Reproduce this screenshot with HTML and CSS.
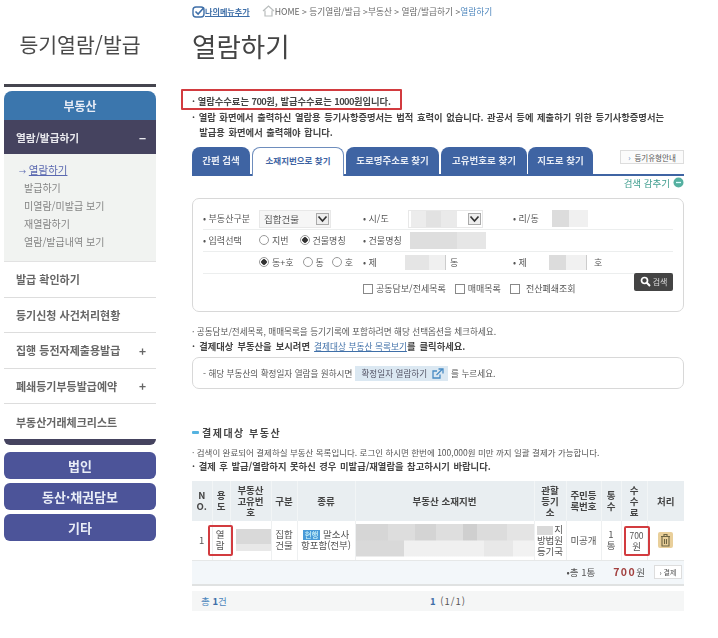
FILE: index.html
```html
<!DOCTYPE html>
<html lang="ko">
<head>
<meta charset="utf-8">
<title>열람하기</title>
<link rel="stylesheet" href="styles.css">
</head>
<body>
<div class="page">
  <aside class="side">
    <h2 class="side-title">등기열람/발급</h2>
    <div class="side-rule"></div>
    <div class="cat cat-top">부동산</div>
    <div class="cur">열람/발급하기<span class="sign">−</span></div>
    <ul class="sub">
      <li class="on"><span class="arr">→</span> <a>열람하기</a></li>
      <li>발급하기</li>
      <li>미열람/미발급 보기</li>
      <li>재열람하기</li>
      <li>열람/발급내역 보기</li>
    </ul>
    <div class="mi">발급 확인하기</div>
    <div class="mi">등기신청 사건처리현황</div>
    <div class="mi">집행 등전자제출용발급<span class="sign">+</span></div>
    <div class="mi">폐쇄등기부등발급예약<span class="sign">+</span></div>
    <div class="mi last">부동산거래체크리스트</div>
    <div class="side-end"></div>
    <div class="cat cat-b">법인</div>
    <div class="cat cat-b">동산·채권담보</div>
    <div class="cat cat-b">기타</div>
  </aside>

  <main class="main">
    <div class="crumb">
      <svg class="ic-check" width="13" height="13" viewBox="0 0 13 13"><rect x="1" y="2" width="11" height="10" rx="3" fill="none" stroke="#3f6fa8" stroke-width="1.4"/><path d="M3.500 6.500l2.600 2.600L12 2.500" fill="none" stroke="#3f6fa8" stroke-width="1.600"/></svg>
      <a class="mymenu">나의메뉴추가</a>
      <svg class="ic-home" width="13" height="12" viewBox="0 0 13 12"><path d="M1 6l5.500-5L12 6M3 5.500V11h7V5.500" fill="none" stroke="#b9bdbd" stroke-width="1.200"/></svg>
      <span>HOME &gt; 등기열람/발급 &gt;부동산 &gt; 열람/발급하기 &gt;<em>열람하기</em></span>
    </div>
    <h1 class="title">열람하기</h1>

    <p class="note redbox">· 열람수수료는 <span class="num">700</span>원, 발급수수료는 <span class="num">1000</span>원입니다.</p>
    <p class="note b2">· 열람 화면에서 출력하신 열람용 등기사항증명서는 법적 효력이 없습니다. 관공서 등에 제출하기 위한 등기사항증명서는<br>&nbsp;&nbsp;발급용 화면에서 출력해야 합니다.</p>

    <div class="tabs">
      <span class="tab t1">간편 검색</span>
      <span class="tab t2 sel">소재지번으로 찾기</span>
      <span class="tab t3">도로명주소로 찾기</span>
      <span class="tab t4">고유번호로 찾기</span>
      <span class="tab t5">지도로 찾기</span>
      <span class="guide"><i>›</i> 등기유형안내</span>
    </div>
    <div class="hide-row">검색 감추기 <svg width="11" height="11" viewBox="0 0 11 11"><circle cx="5.500" cy="5.500" r="5" fill="#55b0a0"/><path d="M3 5.500h5" stroke="#dff" stroke-width="1.300"/></svg></div>

    <section class="search">
      <div class="srow r1">
        <span class="lb">• 부동산구분</span>
        <span class="sel-box s1">집합건물<b class="drop"><svg width="11" height="8" viewBox="0 0 11 8"><path d="M1.500 1.500L5.500 6l4-4.500" fill="none" stroke="#333" stroke-width="1.700"/></svg></b></span>
        <span class="lb">• 시/도</span>
        <span class="sel-box s2"><span class="mosaic m-a"></span><b class="drop"><svg width="11" height="8" viewBox="0 0 11 8"><path d="M1.500 1.500L5.500 6l4-4.500" fill="none" stroke="#333" stroke-width="1.700"/></svg></b></span>
        <span class="lb">• 리/동</span>
        <span class="mosaic m-b"></span>
      </div>
      <div class="srow r2">
        <span class="lb">• 입력선택</span>
        <span class="radios"><i class="ra"></i>지번<i class="ra ck gap"></i>건물명칭</span>
        <span class="lb">• 건물명칭</span>
        <span class="mosaic m-c"></span>
      </div>
      <div class="srow r3">
        <span></span>
        <span class="radios"><i class="ra ck"></i>동+호<i class="ra gap2"></i>동<i class="ra gap3"></i>호</span>
        <span class="lb">• 제</span>
        <span class="unit"><span class="mosaic m-d"></span>동</span>
        <span class="lb">• 제</span>
        <span class="unit"><span class="mosaic m-e"></span>호</span>
      </div>
      <div class="srow r4">
        <span class="checks">
          <i class="cb"></i><span class="c1">공동담보/전세목록</span>
          <i class="cb"></i><span class="c2">매매목록</span>
          <i class="cb"></i><span class="c3">전산폐쇄조회</span>
        </span>
        <span class="go"><svg width="11" height="11" viewBox="0 0 11 11"><circle cx="4.500" cy="4.500" r="3" fill="none" stroke="#fff" stroke-width="1.700"/><path d="M6.800 6.800L10 10" stroke="#fff" stroke-width="2"/></svg> 검색</span>
      </div>
    </section>

    <p class="note n3">· 공동담보/전세목록, 매매목록을 등기기록에 포함하려면 해당 선택옵션을 체크하세요.</p>
    <p class="note b3">· 결제대상 부동산을 보시려면 <a>결제대상 부동산 목록보기</a>를 클릭하세요.</p>

    <div class="infobox">
      - 해당 부동산의 확정일자 열람을 원하시면
      <span class="chip">확정일자 열람하기 <svg width="12" height="11" viewBox="0 0 12 11"><path d="M8 6.500V10H1V3h4" fill="none" stroke="#4a8cc4" stroke-width="1.300"/><path d="M4.500 7L10 1.500M6.500 1H11v4.500" fill="none" stroke="#4a8cc4" stroke-width="1.300"/></svg></span>
      를 누르세요.
    </div>

    <h3 class="sec"><i></i>결제대상 부동산</h3>
    <p class="note n4">· 검색이 완료되어 결제하실 부동산 목록입니다. 로그인 하시면 한번에 100,000원 미만 까지 일괄 결제가 가능합니다.</p>
    <p class="note b4">· 결제 후 발급/열람하지 못하신 경우 미발급/재열람을 참고하시기 바랍니다.</p>

    <table class="tbl">
      <colgroup>
        <col class="w20"><col class="w18"><col class="w41"><col class="w26"><col class="w58"><col class="w179"><col class="w32"><col class="w35"><col class="w20"><col class="w26"><col>
      </colgroup>
      <thead>
        <tr><th>N<br>O.</th><th>용<br>도</th><th>부동산<br>고유번<br>호</th><th>구분</th><th>종류</th><th>부동산 소재지번</th><th>관할<br>등기<br>소</th><th>주민등<br>록번호</th><th>통<br>수</th><th>수<br>수<br>료</th><th>처리</th></tr>
      </thead>
      <tbody>
        <tr>
          <td>1</td>
          <td><span class="mark mk1">열<br>람</span></td>
          <td><span class="mosaic m-f"></span></td>
          <td>집합<br>건물</td>
          <td><span class="tag">현행</span> 말소사<br>항포함(전부)</td>
          <td><span class="mosaic m-g"></span></td>
          <td class="court"><span class="mosaic m-h"></span>지<br>방법원<br>등기국</td>
          <td>미공개</td>
          <td>1<br>통</td>
          <td><span class="mark mk2">700<br><span class="won">원</span></span></td>
          <td><span class="bin"><svg width="11" height="14" viewBox="0 0 11 14"><path d="M2 3.500h7V13H2zM1 3.500h9M4 3.500V1.500h3v2M4.500 6v5M6.500 6v5" fill="none" stroke="#6d6442" stroke-width="1.100"/></svg></span></td>
        </tr>
        <tr class="sum">
          <td colspan="11"><span class="sum-in"><span class="s-t">•총 1통</span><span class="s-m"><b>700</b>원</span><span class="pay">› 결제</span></span></td>
        </tr>
      </tbody>
    </table>
    <div class="pager"><span class="tot">총 <b>1</b>건</span><span class="pg"><b>1</b> (1/1)</span></div>
  </main>
</div>
</body>
</html>
```

FILE: styles.css
```css
* { box-sizing: border-box; }
html, body { margin: 0; padding: 0; background: #fff; }
body { font-family: "Noto Sans CJK KR", "Noto Sans", sans-serif; color: #555; overflow: hidden; }
.page { display: flex; width: 718px; height: 638px; padding-left: 4px; filter: blur(0.55px); }
p, h1, h2, h3, ul { margin: 0; padding: 0; }
i, em { font-style: normal; }

/* sidebar */
.side { width: 152px; flex: none; }
.side-title { height: 84px; padding-top: 28px; text-align: center; font-size: 20.500px; font-weight: 400; line-height: 32px; color: #4a4a4a; }
.side-rule { height: 3px; background: #45454f; margin-bottom: 4px; }
.cat { display: flex; align-items: center; justify-content: center; color: #e8ecf6; font-weight: 700; font-size: 12.500px; }
.cat-top { height: 29px; background: #3b76ad; border-radius: 8px 8px 0 0; font-size: 12px; }
.cat-b { height: 27px; margin-top: 4px; background: #4c5499; border-radius: 6px; font-size: 13px; }
.cur { height: 34px; background: #45435f; color: #e9e9ee; font-weight: 700; font-size: 10.700px; display: flex; justify-content: space-between; align-items: center; padding: 0 10px 0 12px; }
.sub { list-style: none; height: 108px; background: #f1f3f1; padding: 7px 0 0 20px; font-size: 10px; line-height: 18px; color: #858585; border-bottom: 1px solid #e2e2e2; }
.sub li { height: 18px; }
.sub .on { margin-left: -5px; color: #5a68b0; }
.sub a { text-decoration: underline; font-size: 10.500px; }
.arr { font-size: 7px; }
.mi { height: 35.500px; display: flex; justify-content: space-between; align-items: center; padding: 0 10px 0 12px; font-size: 11px; font-weight: 700; color: #666; border-bottom: 1px solid #ddd; }
.mi.last { border-bottom: 0; height: 35px; }
.sign { font-weight: 700; font-size: 12px; }
.side-end { height: 6px; background: #45435f; border-radius: 0 0 8px 8px; margin-bottom: 7px; }

/* main */
.main { width: 492px; margin-left: 36px; flex: none; }
.crumb { height: 22px; display: flex; align-items: center; font-size: 8.700px; color: #666; white-space: nowrap; }
.crumb em { color: #4d86bd; }
.mymenu { color: #3f6fa8; text-decoration: underline; font-weight: 700; font-size: 8.100px; }
.ic-home { margin: 0 0 0 12px; }
.title { height: 67px; padding-top: 9px; font-size: 26.500px; font-weight: 400; line-height: 30px; color: #444; }
.note { font-size: 9px; line-height: 14px; color: #555; white-space: nowrap; }
.redbox { width: 221px; height: 21px; margin-left: -11px; padding: 3px 0 0 9px; border: 2px solid #d23b3f; border-radius: 1px; font-weight: 700; color: #444; line-height: 14px; font-size: 9.300px; }
.num { letter-spacing: -0.600px; }
.b2 { font-weight: 700; color: #444; line-height: 14.500px; font-size: 9.300px; word-spacing: 1px; }

.tabs { position: relative; display: flex; height: 29px; margin-top: 8px; border-bottom: 2px solid #3f64a3; font-size: 9.500px; font-weight: 700; }
.tab { display: flex; align-items: center; justify-content: center; background: #3f64a3; color: #e6ebf5; border-radius: 8px 8px 0 0; padding-bottom: 4px; white-space: nowrap; height: 29px; }
.t1 { width: 58px; margin-right: 2px; }
.t2 { width: 92px; margin-right: 2px; font-size: 8.500px; }
.t3 { width: 93px; margin-right: 2px; }
.t4 { width: 86px; margin-right: 1px; }
.t5 { width: 65px; }
.tab.sel { background: #fff; color: #3f64a3; border: 1px solid #6e8dbd; border-bottom: 0; position: relative; z-index: 1; }
.guide { position: absolute; right: 0; top: 3px; width: 64px; height: 14px; border: 1px solid #ddd; background: #fbfbfb; font-size: 7.500px; font-weight: 400; color: #555; display: flex; align-items: center; justify-content: center; gap: 4px; white-space: nowrap; }
.guide i { color: #4d86bd; }
.hide-row { height: 22px; display: flex; align-items: flex-start; justify-content: flex-end; gap: 3px; padding-top: 1px; line-height: 12px; font-size: 9.500px; color: #3f9d8e; }

.search { height: 114px; border: 1px solid #d8d8d8; border-radius: 7px; padding: 0 10px; font-size: 9px; color: #555; }
.srow { display: grid; grid-template-columns: 56px 104px 45px 105px 39px 1fr; align-items: center; border-bottom: 1px solid #eceeee; white-space: nowrap; }
.r1 { height: 31px; padding-top: 9px; }
.r2 { height: 21.500px; }
.r3 { height: 22px; }
.r4 { display: flex; justify-content: space-between; border: 0; height: 30px; padding-left: 160px; }
.sel-box { display: flex; align-items: center; justify-content: space-between; height: 18px; font-size: 9.500px; padding: 0 1px 0 4px; background: #f6f6f6; border: 1px solid #e8e8e8; }
.s1 { width: 72px; }
.s2 { width: 75px; padding: 0 1px 0 2px; background: #fff; }
.drop { display: flex; align-items: center; justify-content: center; width: 13px; height: 12px; border: 1px solid #aaa; background: #eee; }
.mosaic { display: block; }
.m-a { width: 46px; height: 16px; background: linear-gradient(90deg, #ececec 0 33%, #e2e2e2 33% 66%, #eaeaea 66% 100%); }
.m-b { width: 36px; height: 17px; background: linear-gradient(90deg, #dcdcdc 0 46%, #f0f0f0 46% 100%); }
.m-c { width: 76px; height: 17px; margin-left: 2px; background: linear-gradient(90deg, #dedede 0 62%, #e6e6e6 62% 100%); }
.m-d { width: 41px; height: 15px; margin-right: 4px; background: linear-gradient(90deg, #e5e5e5 0 60%, #f0f0f0 60% 100%); border-right: 1px solid #ccc; }
.m-e { width: 38px; height: 15px; margin-right: 7px; background: linear-gradient(90deg, #dcdcdc 0 45%, #f1f1f1 45% 100%); border-right: 1px solid #ccc; }
.radios, .checks, .unit { display: flex; align-items: center; }
.ra { display: inline-block; width: 10px; height: 10px; border-radius: 50%; border: 1px solid #999; background: #fff; margin-right: 3px; flex: none; }
.ra.ck { background: radial-gradient(circle, #333 0 2.500px, #fff 3px); }
.gap { margin-left: 11px; }
.gap2 { margin-left: 9px; }
.gap3 { margin-left: 8px; }
.r3 .unit { margin-left: -3px; }
.cb { width: 10px; height: 10px; border: 1px solid #888; background: #fff; margin-right: 3px; flex: none; }
.c1 { margin-right: 9px; }
.c2 { margin-right: 9px; }
.c3 { margin-left: 3px; }
.go { width: 39px; height: 18px; margin-top: -14px; background: #444; border-radius: 2px; color: #ddd; font-size: 8px; display: flex; align-items: center; justify-content: center; gap: 2px; }

.n3 { margin-top: 12px; font-size: 8.600px; }
.b3 { font-weight: 700; color: #444; font-size: 9.300px; margin-top: 1px; word-spacing: 1.500px; }
.b3 a { color: #3f6fa8; text-decoration: underline; font-weight: 400; font-size: 8.700px; word-spacing: 0; }
.infobox { height: 32px; margin-top: 3px; border: 1px solid #d8d8d8; border-radius: 7px; padding-left: 10px; font-size: 8.600px; display: flex; align-items: center; gap: 3px; white-space: nowrap; }
.chip { background: #dbe8f2; padding: 0 4px 0 6px; height: 15px; display: flex; align-items: center; gap: 5px; color: #556; }

.sec { height: 18px; margin-top: 34px; font-size: 10px; font-weight: 700; color: #444; display: flex; align-items: center; letter-spacing: 1.500px; }
.sec i { width: 7px; height: 3px; background: #55b3e0; margin-right: 3px; border-radius: 1px; }
.n4 { margin-top: 4px; font-size: 8.500px; }
.b4 { font-weight: 700; color: #444; font-size: 9.300px; word-spacing: 1px; }

.tbl { width: 492px; table-layout: fixed; border-collapse: collapse; margin-top: 8px; font-size: 9.500px; line-height: 11px; color: #555; text-align: center; }
.w20 { width: 20px; } .w18 { width: 18px; } .w41 { width: 41px; } .w26 { width: 26px; } .w58 { width: 58px; } .w179 { width: 179px; } .w32 { width: 32px; } .w35 { width: 35px; }
.tbl th { height: 40px; padding: 0; background: #e9eef1; font-size: 9.500px; font-weight: 700; color: #444; border-left: 1px solid #f2f5f6; }
.tbl td { height: 39px; padding: 0; border-left: 1px solid #eef0f1; border-bottom: 1px solid #e6e8e8; }
.tbl th:first-child, .tbl td:first-child { border-left: 0; }
.m-f { width: 36px; margin-left: 5px; height: 22px; background: linear-gradient(180deg, #d9d9d9 0 68%, #e8e8e8 68% 100%); }
.m-g { height: 33px; background:
  linear-gradient(90deg, #d6d6d6 0 18%, #dddddd 18% 33%, #d4d4d4 33% 45%, #dedede 45% 60%, #cfcfcf 60% 68%, #dcdcdc 68% 85%, #e4e4e4 85% 100%) top / 100% 50% no-repeat,
  linear-gradient(90deg, #d9d9d9 0 27%, #f0f0f0 27% 72%, #e8e8e8 72% 88%, #f2f2f2 88% 100%) bottom / 100% 50% no-repeat; }
.m-h { display: inline-block; width: 16px; height: 9px; background: #d9d9d9; vertical-align: middle; margin-right: 1px; }
.mark { display: flex; flex-direction: column; justify-content: center; align-items: center; border: 2px solid #d23b3f; border-radius: 2px; }
.mk1 { width: 25px; height: 31px; margin-left: -5px; position: relative; }
.mk2 { width: 26px; height: 30px; margin: 2px 0 0 2px; font-size: 8.500px; position: relative; }
.won { font-size: 9.500px; }
.tag { display: inline-block; background: #4a9bd8; color: #dff; padding: 0 2px; font-size: 7.500px; line-height: 10px; }
.bin { display: inline-flex; width: 15px; height: 16px; background: #e9cf9a; border-radius: 2px; align-items: center; justify-content: center; vertical-align: middle; }
.sum td { height: 25px; background: #f3f7fa; border: 0; border-bottom: 2px solid #e0e2e2; }
.sum-in { display: flex; align-items: center; justify-content: flex-end; padding-right: 2px; white-space: nowrap; }
.s-t { margin-right: 18px; }
.s-m b { color: #a2403f; font-size: 10.500px; letter-spacing: 1.500px; }
.s-m { margin-right: 9px; }
.pay { width: 28px; height: 14px; border: 1px solid #ddd; background: #fff; font-size: 7px; line-height: 12px; }

.pager { position: relative; height: 20px; margin-top: 5px; padding-left: 20px; background: #f5f6f6; display: flex; align-items: center; justify-content: center; font-size: 9.500px; color: #555; letter-spacing: 1px; }
.pager b { color: #3f6fa8; }
.tot { position: absolute; left: 9px; color: #4d86bd; letter-spacing: 0; }
```
